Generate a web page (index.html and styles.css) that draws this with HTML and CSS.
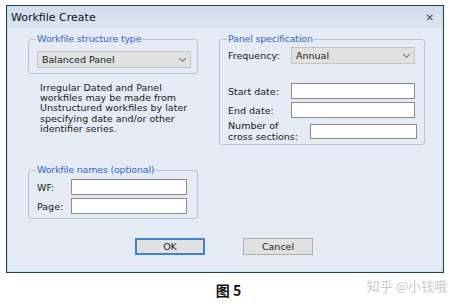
FILE: index.html
```html
<!DOCTYPE html>
<html>
    <head>
        <meta name="viewport" content="width=device-width, initial-scale=1.0">
        <title>Workfile Create</title>
        <link rel="stylesheet" href="styles.css">
    </head>
    <body>
        <div class="dialog">
            <div class="title-bar">
                <span class="title">Workfile Create</span>
                <span class="close">&#x2715;</span>
            </div>
            <div class="dialog-body">
                <div class="columns">
                    <div class="left-col">
                        <fieldset class="group structure">
                            <legend>Workfile structure type</legend>
                            <div class="select wide"><span>Balanced Panel</span><span class="arrow"></span></div>
                        </fieldset>
                        <p class="note">Irregular Dated and Panel workfiles may be made from Unstructured workfiles by later specifying date and/or other identifier series.</p>
                        <fieldset class="group names">
                            <legend>Workfile names (optional)</legend>
                            <div class="row">
                                <label>WF:</label>
                                <div class="field"></div>
                            </div>
                            <div class="row">
                                <label>Page:</label>
                                <div class="field"></div>
                            </div>
                        </fieldset>
                    </div>
                    <div class="right-col">
                        <fieldset class="group panel-spec">
                            <legend>Panel specification</legend>
                            <div class="row freq">
                                <label>Frequency:</label>
                                <div class="select"><span>Annual</span><span class="arrow"></span></div>
                            </div>
                            <div class="row start">
                                <label>Start date:</label>
                                <div class="field"></div>
                            </div>
                            <div class="row">
                                <label>End date:</label>
                                <div class="field"></div>
                            </div>
                            <div class="row cross">
                                <label>Number of<br>cross sections:</label>
                                <div class="field short"></div>
                            </div>
                        </fieldset>
                    </div>
                </div>
                <div class="buttons">
                    <button class="btn default">OK</button>
                    <button class="btn">Cancel</button>
                </div>
            </div>
        </div>
        <div class="caption">
            <span class="fig">图 5</span>
            <span class="mark">知乎 @小钱哦</span>
        </div>
    </body>
</html>
```

FILE: styles.css
```css
body {
    margin: 0;
    background: #ffffff;
    font-family: "DejaVu Sans", Verdana, sans-serif;
    font-size: 9px;
    color: #1a1a1a;
}
.dialog {
    margin: 5px 0 0 6px;
    width: 438px;
    height: 268px;
    box-sizing: border-box;
    border: 1px solid #24404c;
    box-shadow: inset 0 0 0 1px #bfe3ee;
    background: #e4ebf4;
    display: flex;
    flex-direction: column;
}
.title-bar {
    height: 21px;
    margin: 1px 1px 0 1px;
    background: linear-gradient(#d2ddeb, #dbe4f0);
    display: flex;
    align-items: center;
    justify-content: space-between;
    padding: 0 8px 0 3px;
}
.title {
    font-size: 11px;
    color: #111;
}
.close {
    font-size: 10px;
    font-weight: bold;
    color: #3a4652;
}
.dialog-body {
    flex: 1;
    padding: 5px 0 0 21px;
    display: flex;
    flex-direction: column;
}
.columns {
    display: flex;
    gap: 21px;
}
.left-col {
    width: 170px;
    display: flex;
    flex-direction: column;
}
.right-col {
    width: 206px;
}
.group {
    margin: 0;
    border: 1px solid #b7c3d1;
    border-radius: 3px;
    min-width: 0;
}
.group legend {
    color: #3568c4;
    font-size: 9.5px;
    letter-spacing: -0.2px;
    line-height: 12px;
    padding: 0 1px;
    margin-left: -1px;
}
.structure {
    padding: 6px 6px 5px 8px;
}
.select {
    height: 17px;
    box-sizing: border-box;
    background: #e1e1e1;
    border: 1px solid #c4c4c4;
    display: flex;
    align-items: center;
    justify-content: space-between;
    padding: 0 5px 0 4px;
    font-size: 9.5px;
}
.arrow {
    width: 4px;
    height: 4px;
    border-right: 1px solid #777;
    border-bottom: 1px solid #777;
    transform: rotate(45deg);
    margin-top: -3px;
}
.note {
    margin: 9px 0 0 12px;
    font-size: 9.5px;
    line-height: 10.2px;
    width: 154px;
}
.names {
    margin-top: 30px;
    padding: 3px 10px 4px 8px;
}
.row {
    display: flex;
    align-items: center;
    justify-content: space-between;
    margin-bottom: 3px;
}
.row:last-child {
    margin-bottom: 0;
}
.row label {
    font-size: 9.5px;
}
.field {
    width: 116px;
    height: 16px;
    box-sizing: border-box;
    background: #ffffff;
    border: 1px solid #8a8a8a;
}
.panel-spec {
    padding: 2px 9px 2px 8px;
}
.panel-spec .field,
.panel-spec .select {
    width: 124px;
}
.freq {
    margin-bottom: 19px;
}
.panel-spec .field.short {
    width: 107px;
    height: 15px;
}
.cross {
    margin-right: -2px;
    margin-top: -1px;
}
.cross label {
    line-height: 11px;
}
.buttons {
    display: flex;
    gap: 38px;
    margin-top: auto;
    margin-bottom: 17px;
    padding-left: 107px;
}
.btn {
    width: 70px;
    height: 17px;
    padding: 0;
    font-family: "DejaVu Sans", Verdana, sans-serif;
    font-size: 9.5px;
    color: #1a1a1a;
    background: #e1e1e1;
    border: 1px solid #adadad;
}
.btn.default {
    border: 2px solid #3d85d0;
}
.caption {
    position: relative;
    height: 33px;
    display: flex;
    justify-content: center;
    align-items: center;
}
.fig {
    font-family: "Noto Sans CJK SC", sans-serif;
    font-weight: bold;
    font-size: 14px;
    color: #111;
}
.mark {
    position: absolute;
    right: 10px;
    top: 3px;
    font-family: "Noto Sans CJK SC", sans-serif;
    font-size: 13px;
    color: #c9c9c9;
}
```
